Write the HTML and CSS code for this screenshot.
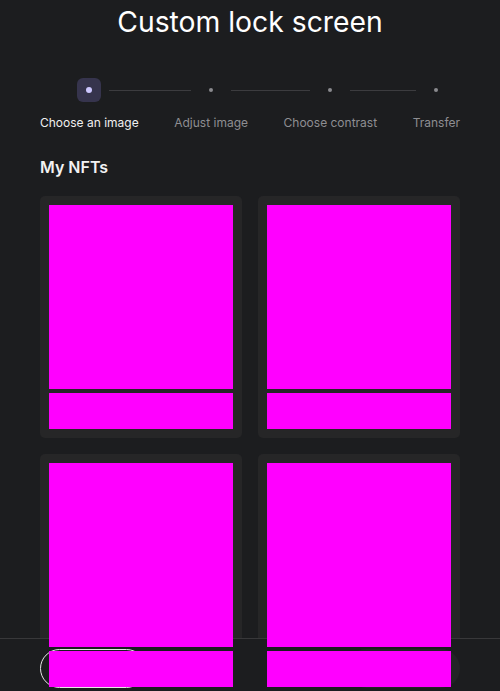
FILE: index.html
```html
<!DOCTYPE html>
<html lang="en">
<head>
<meta charset="utf-8">
<title>Custom lock screen</title>
<link rel="stylesheet" href="styles.css">
</head>
<body>
<main class="page">
  <h1 class="title">Custom lock screen</h1>

  <div class="stepper">
    <div class="step active">
      <div class="marker-row"><span class="seg hidden"></span><span class="box"><span class="dot"></span></span><span class="seg"></span></div>
      <span class="label">Choose an image</span>
    </div>
    <div class="gapline"></div>
    <div class="step">
      <div class="marker-row"><span class="seg"></span><span class="box"><span class="dot"></span></span><span class="seg"></span></div>
      <span class="label">Adjust image</span>
    </div>
    <div class="gapline"></div>
    <div class="step">
      <div class="marker-row"><span class="seg"></span><span class="box"><span class="dot"></span></span><span class="seg"></span></div>
      <span class="label">Choose contrast</span>
    </div>
    <div class="gapline"></div>
    <div class="step">
      <div class="marker-row"><span class="seg"></span><span class="box"><span class="dot"></span></span><span class="seg hidden"></span></div>
      <span class="label">Transfer</span>
    </div>
  </div>

  <h2 class="section-title">My NFTs</h2>

  <div class="grid">
    <div class="card"><div class="media"></div><div class="caption"></div></div>
    <div class="card"><div class="media"></div><div class="caption"></div></div>
    <div class="card"><div class="media"></div><div class="caption"></div></div>
    <div class="card"><div class="media"></div><div class="caption"></div></div>
  </div>
</main>

<footer class="footer">
  <button class="btn btn-outline">Cancel</button>
  <button class="btn btn-filled">Continue</button>
</footer>
</body>
</html>
```

FILE: styles.css
```css
* { box-sizing: border-box; }

html, body {
  margin: 0;
  padding: 0;
  background: #1c1d1f;
  font-family: Inter, "Noto Sans", "Liberation Sans", sans-serif;
  color: #f2f2f2;
}

.page {
  padding: 4px 40px 80px;
}

.title {
  margin: 0;
  font-size: 28.3px;
  line-height: 36px;
  font-weight: 400;
  text-align: center;
  color: #ffffff;
}

.stepper {
  display: flex;
  margin-top: 38px;
}

.step {
  display: flex;
  flex-direction: column;
  align-items: stretch;
}

.marker-row {
  display: flex;
  align-items: center;
  gap: 8px;
  height: 24px;
}

.seg {
  flex: 1;
  height: 1px;
  background: #3c3c3f;
}

.seg.hidden { background: transparent; }

.box {
  width: 24px;
  height: 24px;
  border-radius: 6px;
  display: flex;
  align-items: center;
  justify-content: center;
  flex: none;
}

.dot {
  width: 4px;
  height: 4px;
  border-radius: 50%;
  background: #8a8a8e;
}

.step.active .box { background: #36344d; }
.step.active .dot { width: 6px; height: 6px; background: #cdc7ff; }

.gapline {
  flex: 1;
  height: 24px;
  display: flex;
  align-items: center;
}

.gapline::before {
  content: "";
  flex: 1;
  height: 1px;
  background: #3c3c3f;
}

.label {
  margin-top: 13px;
  font-size: 12px;
  line-height: 16px;
  color: #8e8e92;
  white-space: nowrap;
  text-align: center;
}

.step.active .label { color: #f0f0f0; }

.section-title {
  margin: 26px 0 0;
  font-size: 16px;
  line-height: 20px;
  font-weight: 600;
  color: #f2f2f2;
}

.grid {
  margin-top: 19px;
  display: grid;
  grid-template-columns: 1fr 1fr;
  gap: 16px;
}

.card {
  background: #262627;
  border-radius: 5px;
  padding: 9px;
  display: flex;
  flex-direction: column;
  gap: 4px;
}

.media {
  position: relative;
  z-index: 2;
  aspect-ratio: 1 / 1;
  background: #ff00ff;
}

.caption {
  position: relative;
  z-index: 2;
  height: 36px;
  background: #ff00ff;
}

.footer {
  position: fixed;
  left: 0;
  right: 0;
  bottom: 0;
  z-index: 1;
  height: 53px;
  background: #1c1d1f;
  border-top: 1px solid #38383a;
  display: flex;
  justify-content: space-between;
  align-items: flex-start;
  padding: 10px 40px 0;
}

.btn {
  height: 39px;
  border-radius: 20px;
  font-family: inherit;
  font-size: 14px;
  font-weight: 500;
  padding: 0 24px;
}

.btn-outline {
  width: 106px;
  background: transparent;
  border: 1px solid #e6e6e6;
  color: #ffffff;
}

.btn-filled {
  width: 113px;
  background: #232426;
  border: none;
  color: #5a5a5e;
}
```
